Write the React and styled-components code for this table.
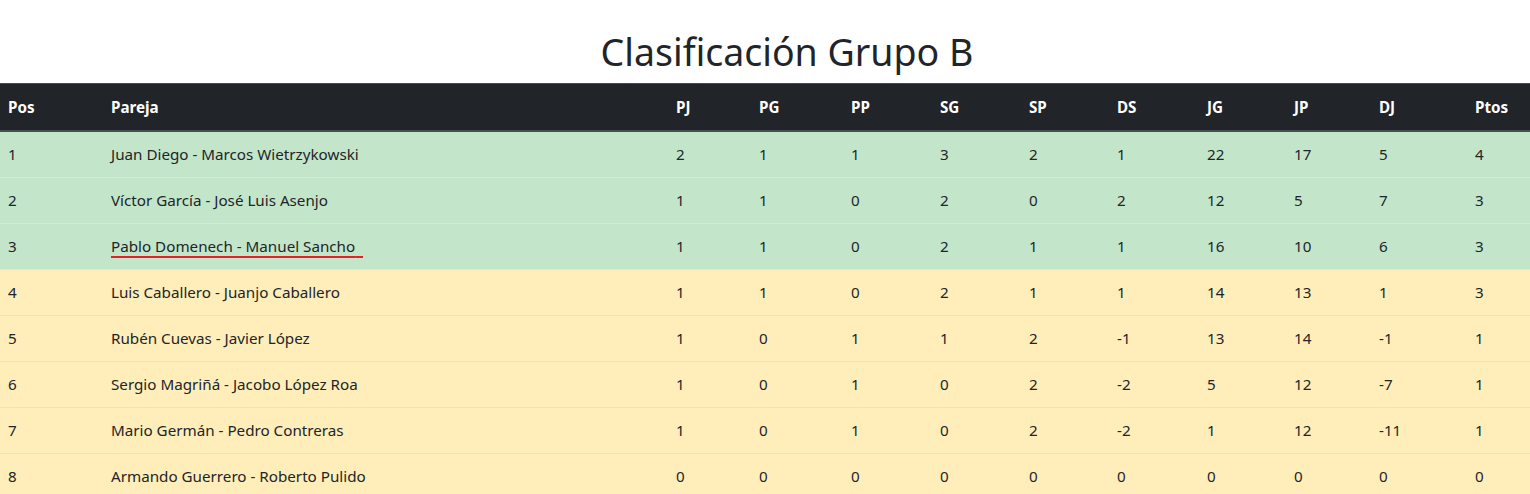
import styled, { createGlobalStyle } from "styled-components";

const GlobalStyle = createGlobalStyle`
  body {
    margin: 0;
    font-family: "Noto Sans", "Open Sans", sans-serif;
    color: #212529;
    background: #fff;
  }
`;

const Page = styled.div`
  padding-top: 28px;
`;

const Title = styled.h1`
  margin: 0 0 8px;
  padding-left: 44px;
  font-size: 37.5px;
  font-weight: 400;
  line-height: 47px;
  text-align: center;
  color: #212529;
`;

const Table = styled.table`
  width: 100%;
  border-collapse: collapse;
  table-layout: fixed;
  font-size: 15.2px;
  line-height: 21px;
`;

const HeadCell = styled.th`
  box-sizing: border-box;
  width: ${(p) => p.$w}px;
  padding: 13px 8px 12px;
  text-align: left;
  font-weight: 700;
  color: #fff;
  background: #212529;
  border-top: 1px solid #454d55;
  border-bottom: 2px solid #454d55;
`;

const Row = styled.tr`
  background: ${(p) => (p.$qualified ? "#c3e6cb" : "#ffeeba")};
`;

const Cell = styled.td`
  box-sizing: border-box;
  padding: 12px 8px;
  border-top: 1px solid #dee2e6;
  white-space: nowrap;
`;

const Marked = styled.span`
  text-decoration: underline;
  text-decoration-color: #e3212b;
  text-decoration-thickness: 2px;
  text-underline-offset: 4px;
`;

const columns = [
  ["Pos", 103],
  ["Pareja", 565],
  ["PJ", 83],
  ["PG", 92],
  ["PP", 89],
  ["SG", 89],
  ["SP", 88],
  ["DS", 90],
  ["JG", 87],
  ["JP", 85],
  ["DJ", 96],
  ["Ptos", 63],
];

const rows = [
  ["Juan Diego - Marcos Wietrzykowski", 2, 1, 1, 3, 2, 1, 22, 17, 5, 4],
  ["Víctor García - José Luis Asenjo", 1, 1, 0, 2, 0, 2, 12, 5, 7, 3],
  ["Pablo Domenech - Manuel Sancho", 1, 1, 0, 2, 1, 1, 16, 10, 6, 3],
  ["Luis Caballero - Juanjo Caballero", 1, 1, 0, 2, 1, 1, 14, 13, 1, 3],
  ["Rubén Cuevas - Javier López", 1, 0, 1, 1, 2, -1, 13, 14, -1, 1],
  ["Sergio Magriñá - Jacobo López Roa", 1, 0, 1, 0, 2, -2, 5, 12, -7, 1],
  ["Mario Germán - Pedro Contreras", 1, 0, 1, 0, 2, -2, 1, 12, -11, 1],
  ["Armando Guerrero - Roberto Pulido", 0, 0, 0, 0, 0, 0, 0, 0, 0, 0],
];

const myPair = "Pablo Domenech - Manuel Sancho";

export default function App() {
  return (
    <Page>
      <GlobalStyle />
      <Title>Clasificación Grupo B</Title>
      <Table>
        <thead>
          <tr>
            {columns.map(([label, w]) => (
              <HeadCell key={label} $w={w}>
                {label}
              </HeadCell>
            ))}
          </tr>
        </thead>
        <tbody>
          {rows.map(([pair, ...stats], i) => (
            <Row key={pair} $qualified={i < 3}>
              <Cell>{i + 1}</Cell>
              <Cell>
                {pair === myPair ? <Marked>{pair}{"\u00a0\u00a0"}</Marked> : pair}
              </Cell>
              {stats.map((v, j) => (
                <Cell key={j}>{v}</Cell>
              ))}
            </Row>
          ))}
        </tbody>
      </Table>
    </Page>
  );
}
